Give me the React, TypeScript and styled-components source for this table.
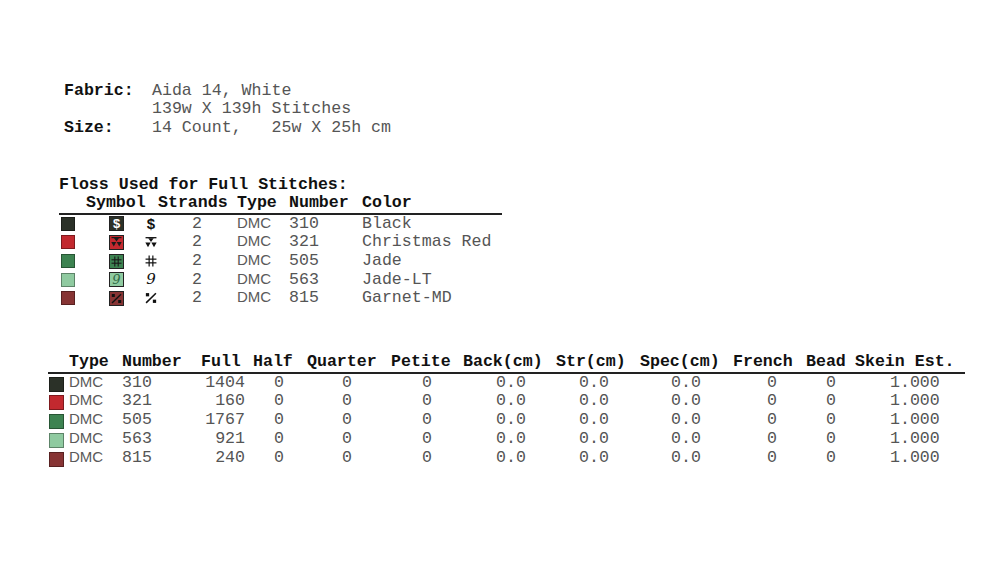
import * as React from "react";
import styled, { createGlobalStyle } from "styled-components";

const GlobalStyle = createGlobalStyle`
  html, body {
    margin: 0;
    padding: 0;
    background: #ffffff;
  }
  body {
    font-family: "Liberation Mono", "Courier New", monospace;
    font-size: 16.6px;
    color: #555555;
  }
`;

interface Floss {
  number: string;
  name: string;
  color: string;
  symbol: "dollar" | "tri" | "hash" | "nine" | "percent";
  ink: string;
  full: number;
}

const floss: Floss[] = [
  { number: "310", name: "Black", color: "#2b3128", symbol: "dollar", ink: "#ffffff", full: 1404 },
  { number: "321", name: "Christmas Red", color: "#c2292f", symbol: "tri", ink: "#1a1a1a", full: 160 },
  { number: "505", name: "Jade", color: "#3d8351", symbol: "hash", ink: "#1a1a1a", full: 1767 },
  { number: "563", name: "Jade-LT", color: "#8fcaa0", symbol: "nine", ink: "#2f6a45", full: 921 },
  { number: "815", name: "Garnet-MD", color: "#873434", symbol: "percent", ink: "#111111", full: 240 },
];

const Page = styled.div`
  padding: 82px 0 0 0;
  display: flex;
  flex-direction: column;
`;

/* ---------- fabric block ---------- */

const InfoGrid = styled.div`
  display: grid;
  grid-template-columns: 88px auto;
  margin-left: 64px;
  line-height: 18.4px;
`;

const InfoLabel = styled.div`
  font-weight: bold;
  color: #111;
`;

const InfoValue = styled.div`
  white-space: pre;
`;

/* ---------- floss key ---------- */

const KeyTitle = styled.div`
  margin: 39px 0 0 59px;
  font-weight: bold;
  color: #111;
  line-height: 18px;
`;

const KeyTable = styled.div`
  margin-left: 59px;
  width: 443px;
  display: grid;
  grid-template-columns: 27px 72px 79px 52px 73px 1fr;
  line-height: 18.6px;
`;

const HeadCell = styled.div`
  font-weight: bold;
  color: #111;
  white-space: nowrap;
  border-bottom: 2px solid #222;
`;

const Cell = styled.div<{ $indent?: number; $right?: number; $align?: string }>`
  white-space: pre;
  padding-left: ${(p) => p.$indent ?? 0}px;
  padding-right: ${(p) => p.$right ?? 0}px;
  text-align: ${(p) => p.$align ?? "left"};
`;

const Swatch = styled.span<{ $color: string; $size: number; $top: number }>`
  display: inline-block;
  vertical-align: top;
  margin-top: ${(p) => p.$top}px;
  width: ${(p) => p.$size}px;
  height: ${(p) => p.$size}px;
  box-sizing: border-box;
  background: ${(p) => p.$color};
  border: 1px solid rgba(0, 0, 0, 0.35);
`;

const SymbolBox = styled.span<{ $color: string; $ink: string }>`
  display: inline-flex;
  vertical-align: top;
  margin-top: 1.5px;
  align-items: center;
  justify-content: center;
  width: 15px;
  height: 15px;
  box-sizing: border-box;
  background: ${(p) => p.$color};
  border: 1px solid #222;
  color: ${(p) => p.$ink};
  margin-right: 21px;
`;

const PlainMark = styled.span`
  display: inline-flex;
  vertical-align: top;
  margin-top: 1.5px;
  align-items: center;
  justify-content: center;
  width: 12px;
  height: 15px;
  color: #111;
`;

const Glyph = styled.span<{ $kind: string; $size: number }>`
  font-family: ${(p) =>
    p.$kind === "nine" ? '"DejaVu Serif", serif' : '"Liberation Sans", Arial, sans-serif'};
  font-style: ${(p) => (p.$kind === "nine" ? "italic" : "normal")};
  font-weight: ${(p) => (p.$kind === "dollar" ? "bold" : "normal")};
  font-size: ${(p) => p.$size}px;
  line-height: 1;
`;

const Sans = styled.span`
  font-family: "Liberation Sans", Arial, sans-serif;
  font-size: 15px;
  line-height: 1;
  color: #5a5a5a;
`;

function SymbolMark({ kind, ink, big }: { kind: Floss["symbol"]; ink: string; big?: boolean }) {
  const s = big ? 12 : 11;
  if (kind === "tri") {
    return (
      <svg width={s} height={s - 1} viewBox="0 0 11 10">
        <rect x="0.5" y="0" width="10" height="1.2" fill={ink} />
        <polygon points="3,1 8,1 5.5,4.6" fill={ink} />
        <polygon points="0.3,5 5.2,5 2.75,9.4" fill={ink} />
        <polygon points="5.8,5 10.7,5 8.25,9.4" fill={ink} />
      </svg>
    );
  }
  if (kind === "hash") {
    return (
      <svg width={s} height={s} viewBox="0 0 11 11">
        <g stroke={ink} strokeWidth="1.1" fill="none">
          <line x1="3.8" y1="0.5" x2="3.8" y2="10.5" />
          <line x1="7.2" y1="0.5" x2="7.2" y2="10.5" />
          <line x1="0.5" y1="3.8" x2="10.5" y2="3.8" />
          <line x1="0.5" y1="7.2" x2="10.5" y2="7.2" />
        </g>
      </svg>
    );
  }
  if (kind === "percent") {
    return (
      <svg width={s} height={s} viewBox="0 0 11 11">
        <rect x="0.8" y="1" width="3" height="3" fill={ink} />
        <rect x="7.2" y="7" width="3" height="3" fill={ink} />
        <line x1="1" y1="10" x2="10" y2="1.2" stroke={ink} strokeWidth="1.4" />
      </svg>
    );
  }
  return (
    <Glyph $kind={kind} $size={big ? 15 : 13}>
      {kind === "dollar" ? "$" : "9"}
    </Glyph>
  );
}

/* ---------- totals table ---------- */

const TotalsTable = styled.div`
  margin: 45px 0 0 48px;
  width: 917px;
  display: grid;
  grid-template-columns: 21px 53px 79px 52px 54px 84px 72px 93px 84px 93px 73px 49px 110px;
  line-height: 18.75px;
`;

interface Col {
  label: string;
  value: (f: Floss) => React.ReactNode;
  indent?: number;
  right?: number;
  align?: string;
}

const totalCols: Col[] = [
  { label: "Type", value: () => <Sans>DMC</Sans> },
  { label: "Number", value: (f) => f.number, indent: 0 },
  { label: "Full", value: (f) => String(f.full), align: "right", right: 8 },
  { label: "Half", value: () => "0", indent: 21 },
  { label: "Quarter", value: () => "0", indent: 35 },
  { label: "Petite", value: () => "0", indent: 31 },
  { label: "Back(cm)", value: () => "0.0", indent: 33 },
  { label: "Str(cm)", value: () => "0.0", indent: 23 },
  { label: "Spec(cm)", value: () => "0.0", indent: 31 },
  { label: "French", value: () => "0", indent: 34 },
  { label: "Bead", value: () => "0", indent: 20 },
  { label: "Skein Est.", value: () => "1.000", indent: 35 },
];

export default function App() {
  return (
    <Page>
      <GlobalStyle />
      <InfoGrid>
        <InfoLabel>Fabric:</InfoLabel>
        <InfoValue>Aida 14, White</InfoValue>
        <div />
        <InfoValue>139w X 139h Stitches</InfoValue>
        <InfoLabel>Size:</InfoLabel>
        <InfoValue>14 Count,   25w X 25h cm</InfoValue>
      </InfoGrid>

      <KeyTitle>Floss Used for Full Stitches:</KeyTitle>
      <KeyTable>
        <HeadCell />
        <HeadCell>Symbol</HeadCell>
        <HeadCell>Strands</HeadCell>
        <HeadCell>Type</HeadCell>
        <HeadCell>Number</HeadCell>
        <HeadCell>Color</HeadCell>
        {floss.map((f) => (
          <React.Fragment key={f.number}>
            <Cell $indent={2}>
              <Swatch $color={f.color} $size={14} $top={2} />
            </Cell>
            <Cell $indent={23}>
              <SymbolBox $color={f.color} $ink={f.ink}>
                <SymbolMark kind={f.symbol} ink={f.ink} />
              </SymbolBox>
              <PlainMark>
                <SymbolMark kind={f.symbol} ink="#111" big />
              </PlainMark>
            </Cell>
            <Cell $indent={34}>2</Cell>
            <Cell>
              <Sans>DMC</Sans>
            </Cell>
            <Cell>{f.number}</Cell>
            <Cell>{f.name}</Cell>
          </React.Fragment>
        ))}
      </KeyTable>

      <TotalsTable>
        <HeadCell />
        {totalCols.map((c) => (
          <HeadCell key={c.label}>{c.label}</HeadCell>
        ))}
        {floss.map((f) => (
          <React.Fragment key={f.number}>
            <Cell $indent={1}>
              <Swatch $color={f.color} $size={15} $top={3} />
            </Cell>
            {totalCols.map((c) => (
              <Cell key={c.label} $indent={c.indent} $right={c.right} $align={c.align}>
                {c.value(f)}
              </Cell>
            ))}
          </React.Fragment>
        ))}
      </TotalsTable>
    </Page>
  );
}
